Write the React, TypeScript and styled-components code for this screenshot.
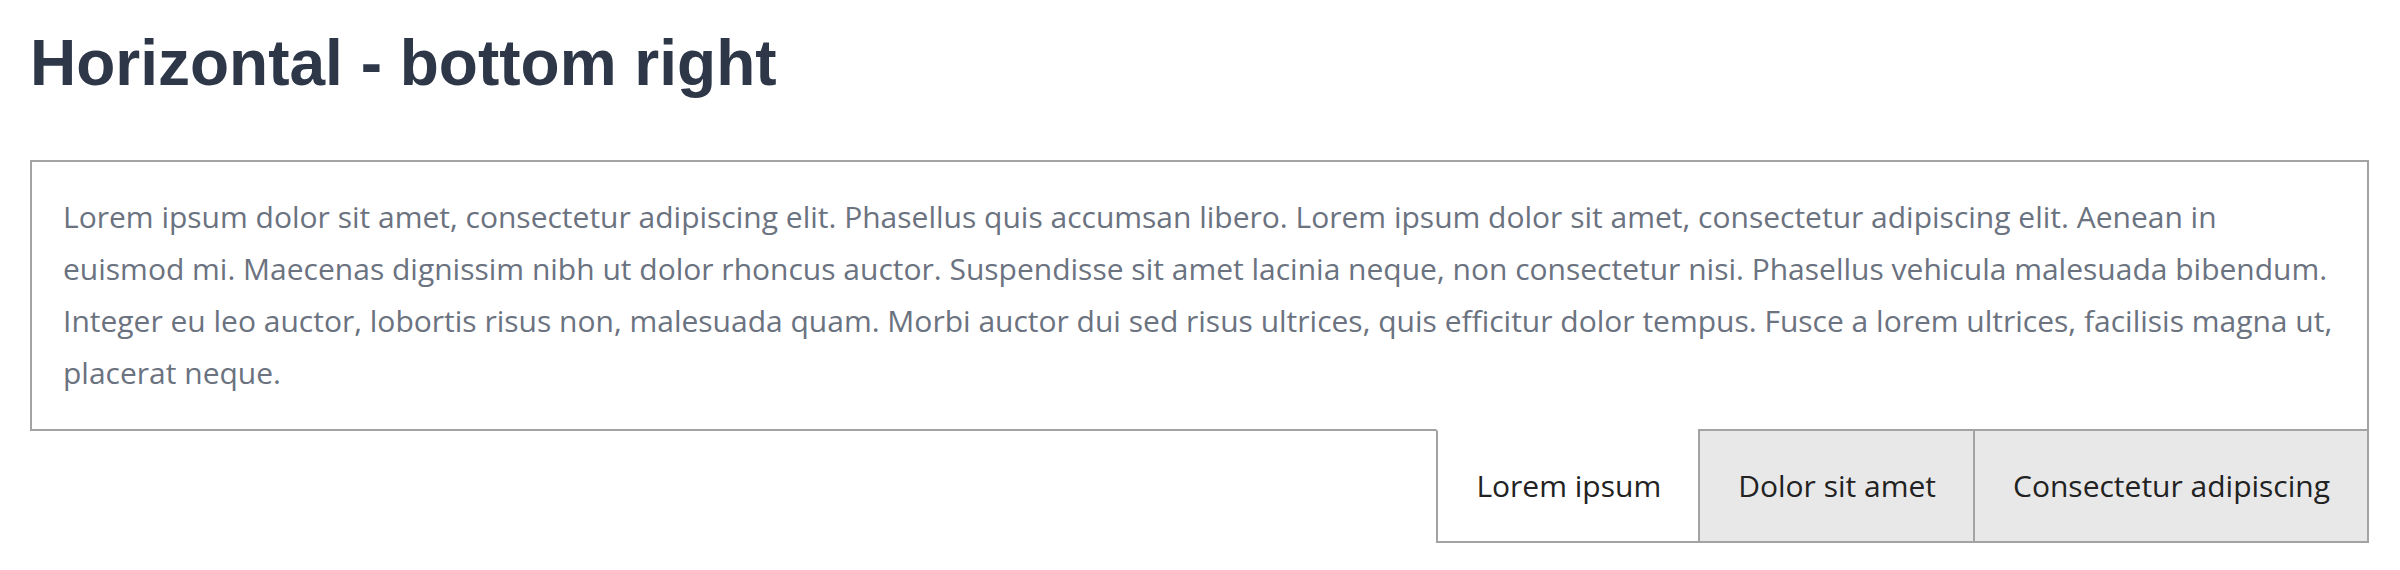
import React, { useState } from "react";
import styled, { createGlobalStyle } from "styled-components";

const GlobalStyle = createGlobalStyle`
  html, body {
    margin: 0;
    padding: 0;
    background: #ffffff;
  }
  * { box-sizing: border-box; }
`;

const Page = styled.div`
  padding: 31px 31px 30px 30px;
`;

const Heading = styled.h2`
  margin: 0 0 65px 0;
  font-family: "Liberation Sans", Arial, Helvetica, sans-serif;
  font-weight: 700;
  font-size: 64px;
  line-height: 64px;
  color: #2d3748;
`;

const Tabs = styled.div`
  display: flex;
  flex-direction: column;
`;

const Panel = styled.div`
  border: 2px solid #a3a3a3;
  padding: 29px 30px 30px 31px;
  background: #ffffff;
`;

const Text = styled.p`
  margin: 0;
  font-family: "Open Sans", "Noto Sans", sans-serif;
  font-size: 30px;
  line-height: 52px;
  color: #6b7280;
`;

const TabBar = styled.div`
  display: flex;
  justify-content: flex-end;
  margin-top: -2px;
`;

const Tab = styled.button<{ $active: boolean; $last: boolean }>`
  appearance: none;
  margin: 0;
  padding: 30px 37px 30px 38px;
  font-family: "Open Sans", "Noto Sans", sans-serif;
  font-size: 30px;
  line-height: 50px;
  color: #222222;
  cursor: pointer;
  border: 2px solid #a3a3a3;
  border-right-width: ${(p) => (p.$last ? "2px" : "0")};
  border-top-color: ${(p) => (p.$active ? "#ffffff" : "#a3a3a3")};
  background: ${(p) => (p.$active ? "#ffffff" : "#e8e8e8")};
`;

const labels = ["Lorem ipsum", "Dolor sit amet", "Consectetur adipiscing"];

export default function App() {
  const [active, setActive] = useState(0);
  return (
    <>
      <GlobalStyle />
      <Page>
        <Heading>Horizontal - bottom right</Heading>
        <Tabs>
          <Panel>
            <Text>
              Lorem ipsum dolor sit amet, consectetur adipiscing elit. Phasellus quis accumsan libero. Lorem ipsum dolor sit amet, consectetur adipiscing elit. Aenean in euismod mi. Maecenas dignissim nibh ut dolor rhoncus auctor. Suspendisse sit amet lacinia neque, non consectetur nisi. Phasellus vehicula malesuada bibendum. Integer eu leo auctor, lobortis risus non, malesuada quam. Morbi auctor dui sed risus ultrices, quis efficitur dolor tempus. Fusce a lorem ultrices, facilisis magna ut, placerat neque.
            </Text>
          </Panel>
          <TabBar>
            {labels.map((l, i) => (
              <Tab
                key={l}
                $active={i === active}
                $last={i === labels.length - 1}
                onClick={() => setActive(i)}
              >
                {l}
              </Tab>
            ))}
          </TabBar>
        </Tabs>
      </Page>
    </>
  );
}
